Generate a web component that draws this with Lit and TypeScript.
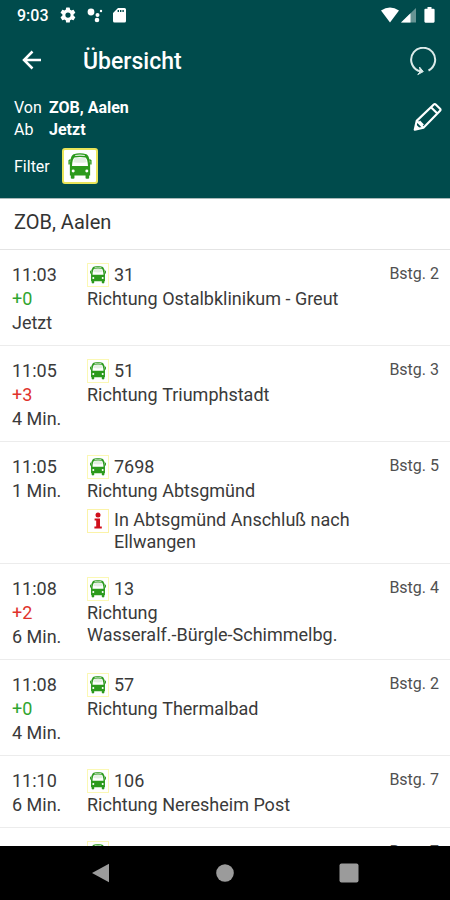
import { LitElement, html, css, svg, nothing } from "lit";
import { customElement, property } from "lit/decorators.js";
import { classMap } from "lit/directives/class-map.js";

interface Departure {
  time: string;
  delay?: string;
  late?: boolean;
  wait: string;
  line: string;
  direction: string;
  platform: string;
  note?: string;
}

const departures: Departure[] = [
  { time: "11:03", delay: "+0", wait: "Jetzt", line: "31", direction: "Ostalbklinikum - Greut", platform: "Bstg. 2" },
  { time: "11:05", delay: "+3", late: true, wait: "4 Min.", line: "51", direction: "Triumphstadt", platform: "Bstg. 3" },
  { time: "11:05", wait: "1 Min.", line: "7698", direction: "Abtsgmünd", platform: "Bstg. 5", note: "In Abtsgmünd Anschluß nach Ellwangen" },
  { time: "11:08", delay: "+2", late: true, wait: "6 Min.", line: "13", direction: "Wasseralf.-Bürgle-Schimmelbg.", platform: "Bstg. 4" },
  { time: "11:08", delay: "+0", wait: "4 Min.", line: "57", direction: "Thermalbad", platform: "Bstg. 2" },
  { time: "11:10", wait: "6 Min.", line: "106", direction: "Neresheim Post", platform: "Bstg. 7" },
  { time: "", wait: "", line: "", direction: "", platform: "Bstg. 7" },
];

const busShape = svg`
  <path fill="#2c9a1c" fill-rule="evenodd" d="M6 1.6Q12-.4 18 1.600C20 2.600 21 5.500 21.500 11.500V21.500H20.600V24Q18.900 25 17.200 24V21.500H6.800V24Q5.100 25 3.400 24V21.500H2.500V11.500C3 5.500 4 2.600 6 1.600ZM6.800 4.600C5.400 5.800 4.700 8.500 4.500 12.600H19.500C19.300 8.500 18.600 5.800 17.200 4.600Q12 3.600 6.800 4.600Z"/>
  <path fill="#e3efe1" d="M7.500 2.200Q12 1.200 16.500 2.200V3.200Q12 2.400 7.500 3.200ZM6.800 5.200Q12 4.200 17.200 5.200L18.300 9Q12 10 5.700 9Z"/>
  <path stroke="#2c9a1c" stroke-width="1.300" fill="none" d="M3.200 6.500L1.800 7.500V11M20.800 6.500L22.200 7.500V11"/>
  <circle cx="5.600" cy="17.200" r="1.400" fill="#fff"/><circle cx="18.400" cy="17.200" r="1.400" fill="#fff"/>`;

@customElement("bus-badge")
class BusBadge extends LitElement {
  static styles = css`
    :host { display: block; flex: none; width: 22px; height: 24px; box-sizing: border-box; border: 1px solid #fbf8b4; background: #fff; }
    :host([large]) { width: 36px; height: 36px; border: 2px solid #e9e45a; border-radius: 3px; }
    svg { display: block; width: 100%; height: 100%; }
  `;
  @property({ type: Boolean, reflect: true }) large = false;
  render() {
    return html`<svg viewBox=${this.large ? "-3 -2 30 29" : "-1 -2 26 30"} aria-hidden="true">${busShape}</svg>`;
  }
}

@customElement("departure-row")
class DepartureRow extends LitElement {
  static styles = css`
    :host { display: grid; grid-template-columns: 75px minmax(0, 1fr) auto; box-sizing: border-box; padding: 13px 11px 10px 12px; border-bottom: 1px solid #ececec; font-size: 18px; line-height: 24px; color: #3a3a3a; }
    .times, .trip { display: flex; flex-direction: column; }
    .ontime { color: #2fa52f; }
    .late { color: #e0332c; }
    .line, .note { display: flex; gap: 5px; }
    .line { height: 24px; }
    .direction, .note { line-height: 22px; }
    .direction { padding: 1px 0; }
    .place { display: inline-block; }
    .note { margin-top: 6px; }
    .platform { font-size: 16px; line-height: 22px; color: #505050; }
    .info { flex: none; box-sizing: border-box; width: 22px; height: 24px; border: 1px solid #fbf3a8; background: #fff; }
  `;
  @property({ attribute: false }) departure!: Departure;
  render() {
    const d = this.departure;
    return html`
      <div class="times">
        <span>${d.time}</span>
        ${d.delay ? html`<span class=${classMap({ late: !!d.late, ontime: !d.late })}>${d.delay}</span>` : nothing}
        <span>${d.wait}</span>
      </div>
      <div class="trip">
        <div class="line"><bus-badge></bus-badge><span>${d.line}</span></div>
        ${d.direction ? html`<div class="direction">Richtung <span class="place">${d.direction}</span></div>` : nothing}
        ${d.note
          ? html`<div class="note">
              <svg class="info" viewBox="0 0 20 22" aria-hidden="true">
                <circle cx="10" cy="5" r="2.5" fill="#d0101c" />
                <path fill="#d0101c" d="M6.600 8.500H12V16.500H13.800V18.500H6.400V16.500H8.200V10.500H6.600Z" />
              </svg>
              <span>${d.note}</span>
            </div>`
          : nothing}
      </div>
      <div class="platform">${d.platform}</div>
    `;
  }
}

@customElement("app-root")
class AppRoot extends LitElement {
  static styles = css`
    :host { display: flex; flex-direction: column; height: 100vh; overflow: hidden; background: #fff; font-family: Roboto, "Liberation Sans", sans-serif; }
    svg { display: block; }
    button { margin: 0; padding: 0; border: 0; background: none; color: inherit; font: inherit; display: grid; place-items: center; cursor: pointer; }
    .top { flex: none; background: #004b4c; color: #fff; border-bottom: 1px solid #a9b9b9; }
    .status { display: flex; justify-content: space-between; align-items: center; height: 30px; padding: 0 15px 0 17px; font-size: 16px; font-weight: 500; }
    .group { display: flex; align-items: center; }
    .left { gap: 10px; }
    .right { gap: 2px; }
    .battery { margin-left: 6px; }
    .bar { display: flex; align-items: center; height: 63px; padding: 0 12px 0 20px; }
    h1 { flex: 1; margin: 0 0 0 39px; font-size: 23px; line-height: 32px; font-weight: 500; }
    .query { display: flex; align-items: flex-start; justify-content: space-between; padding: 4px 8px 0 14px; font-size: 16px; line-height: 22px; }
    dl { display: grid; grid-template-columns: 35px auto; margin: 0; }
    dd { margin: 0; font-weight: 700; }
    .edit { margin-top: 5px; }
    .filter { display: flex; align-items: center; gap: 12px; padding: 7px 14px 14px; font-size: 16px; }
    h2 { flex: none; margin: 0; padding: 9px 14px 13px; border-bottom: 1px solid #e4e4e4; font-size: 20px; line-height: 28px; font-weight: 400; color: #333; }
    .list { flex: 1; min-height: 0; overflow: hidden; }
    .nav { flex: none; display: flex; justify-content: center; align-items: center; gap: 104px; height: 54px; background: #000; color: #9b9b9b; }
  `;
  render() {
    return html`
      <header class="top">
        <div class="status">
          <div class="group left">
            <span>9:03</span>
            <svg width="18" height="18" viewBox="0 0 24 24" fill="#fff"><path d="M19.4 13a7.5 7.5 0 0 0 0-2l2.1-1.6a.5.5 0 0 0 .1-.7l-2-3.4a.5.5 0 0 0-.6-.2l-2.5 1a7 7 0 0 0-1.7-1l-.4-2.6a.5.5 0 0 0-.5-.5h-4a.5.5 0 0 0-.5.5L9 5.100a7 7 0 0 0-1.700 1l-2.500-1a.5.5 0 0 0-.6.2l-2 3.400a.5.5 0 0 0 .1.700L4.500 11a7.500 7.500 0 0 0 0 2l-2.200 1.600a.5.5 0 0 0-.1.700l2 3.400c.1.200.4.300.6.200l2.500-1a7 7 0 0 0 1.700 1l.4 2.600c0 .3.200.5.5.5h4c.3 0 .5-.2.5-.5l.4-2.600a7 7 0 0 0 1.700-1l2.500 1c.2.100.5 0 .6-.2l2-3.400a.5.5 0 0 0-.1-.700ZM12 15.500a3.500 3.500 0 1 1 0-7 3.500 3.500 0 0 1 0 7Z" /></svg>
            <svg width="16" height="16" viewBox="0 0 16 16" fill="#fff"><circle cx="4" cy="5" r="3.400" /><circle cx="10.500" cy="8" r="2" /><circle cx="10" cy="13" r="2.300" /><circle cx="14" cy="4" r="1.200" /></svg>
            <svg width="13" height="16" viewBox="0 0 13 16" fill="#fff"><path fill-rule="evenodd" d="M5 1H11.500Q13 1 13 2.500V14Q13 15.500 11.500 15.500H1.500Q0 15.500 0 14V6ZM4.600 3V5H6V3ZM7 3V5H8.400V3ZM9.400 3V5H10.800V3Z" /></svg>
          </div>
          <div class="group right">
            <svg width="18" height="16" viewBox="0 0 18 16" fill="#fff"><path d="M0 3.500Q9-2.500 18 3.500L9 15.500Z" /></svg>
            <svg width="15" height="16" viewBox="0 0 15 16" fill="#fff"><path opacity=".4" d="M15 1V15.500H0Z" /><path d="M9.500 6.300V15.500H0Z" /></svg>
            <svg class="battery" width="11" height="16" viewBox="0 0 11 16" fill="#fff"><path d="M3.500 0H7.500V1.700H9.500Q10.600 1.700 10.600 2.800V14.600Q10.600 15.700 9.500 15.700H1.500Q.4 15.700.4 14.600V2.800Q.4 1.700 1.500 1.700H3.500Z" /></svg>
          </div>
        </div>
        <div class="bar">
          <button aria-label="Zurück">
            <svg width="24" height="24" viewBox="0 0 24 24" fill="none" stroke="#fff" stroke-width="2.500"><path d="M21 10H4M12.500 1.500L4 10L12.500 18.500" /></svg>
          </button>
          <h1>Übersicht</h1>
          <button aria-label="Aktualisieren">
            <svg width="30" height="30" viewBox="0 0 30 30" fill="none" stroke="#dcebea" stroke-width="2"><path d="M20.500 23.500A12 12 0 1 0 9.800 23.500L13 24.500" /><path fill="#dcebea" stroke-width="1" d="M11.500 20L15.300 24.600L9.800 27.600L12.300 24.500Z" /></svg>
          </button>
        </div>
        <div class="query">
          <dl>
            <dt>Von</dt><dd>ZOB, Aalen</dd>
            <dt>Ab</dt><dd>Jetzt</dd>
          </dl>
          <button class="edit" aria-label="Bearbeiten">
            <svg width="29" height="30" viewBox="0 0 30 30" fill="none" stroke="#fff" stroke-width="2.200" stroke-linejoin="round"><path d="M1.800 28.200L3.800 19L21.500 2Q22.500 1 23.500 2L28 6.500Q29 7.500 28 8.500L10.800 26ZM3.800 19L10.800 26M18.600 5L25.200 11.400M6.500 19.500L10.500 23.500" /><path fill="#fff" stroke="none" d="M1.800 28.200L3 22.500L7.500 27Z" /></svg>
          </button>
        </div>
        <div class="filter">
          <span>Filter</span>
          <button aria-label="Bus"><bus-badge large></bus-badge></button>
        </div>
      </header>
      <h2>ZOB, Aalen</h2>
      <main class="list">${departures.map((d) => html`<departure-row .departure=${d}></departure-row>`)}</main>
      <nav class="nav">
        <button aria-label="Zurück"><svg width="20" height="20" viewBox="0 0 20 20" fill="currentColor"><path d="M1 10L18 .8V19.200Z" /></svg></button>
        <button aria-label="Startseite"><svg width="20" height="20" viewBox="0 0 20 20" fill="currentColor"><circle cx="10" cy="10" r="8.800" /></svg></button>
        <button aria-label="Letzte Apps"><svg width="20" height="20" viewBox="0 0 20 20" fill="currentColor"><rect x=".5" y=".5" width="19" height="19" rx="2" /></svg></button>
      </nav>
    `;
  }
}
